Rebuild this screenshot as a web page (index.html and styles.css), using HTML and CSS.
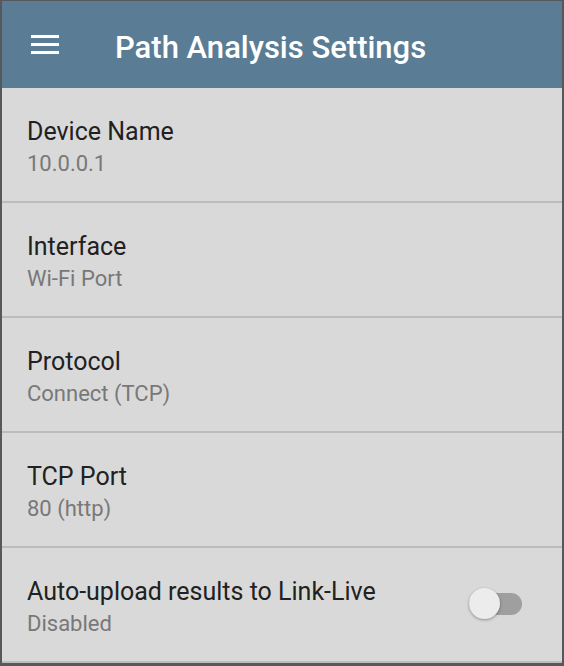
FILE: index.html
```html
<!DOCTYPE html>
<html lang="en">

<head>
    <title>Path Analysis Settings</title>

    <link rel="stylesheet" href="styles.css">
</head>

<body>
    <div class="screen">
        <header class="toolbar">
            <button class="toolbar__menu" aria-label="Menu">
                <span></span>
                <span></span>
                <span></span>
            </button>
            <h1 class="toolbar__title">Path Analysis Settings</h1>
        </header>

        <ul class="settings">
            <li class="setting">
                <div class="setting__text">
                    <div class="setting__title">Device Name</div>
                    <div class="setting__value">10.0.0.1</div>
                </div>
            </li>
            <li class="setting">
                <div class="setting__text">
                    <div class="setting__title">Interface</div>
                    <div class="setting__value">Wi-Fi Port</div>
                </div>
            </li>
            <li class="setting">
                <div class="setting__text">
                    <div class="setting__title">Protocol</div>
                    <div class="setting__value">Connect (TCP)</div>
                </div>
            </li>
            <li class="setting">
                <div class="setting__text">
                    <div class="setting__title">TCP Port</div>
                    <div class="setting__value">80 (http)</div>
                </div>
            </li>
            <li class="setting">
                <div class="setting__text">
                    <div class="setting__title">Auto-upload results to Link-Live</div>
                    <div class="setting__value">Disabled</div>
                </div>
                <label class="switch">
                    <input type="checkbox" />
                    <span class="switch__track"></span>
                    <span class="switch__thumb"></span>
                </label>
            </li>
        </ul>
    </div>
</body>

</html>
```

FILE: styles.css
```css
* {
    padding: 0;
    margin: 0;
    box-sizing: border-box;
}

body {
    background: #d9d9d9;
    font-family: Roboto, "Noto Sans", sans-serif;
}

.screen {
    width: 564px;
    height: 666px;
    border: 2px solid #56595c;
    border-top-width: 1px;
    border-bottom-width: 3px;
    background: #d9d9d9;
    overflow: hidden;
}

.toolbar {
    display: flex;
    align-items: center;
    height: 87px;
    background: #5a7d95;
    padding-left: 29px;
}

.toolbar__menu {
    display: flex;
    flex-direction: column;
    gap: 5px;
    width: 28px;
    background: none;
    border: none;
}

.toolbar__menu span {
    display: block;
    height: 3px;
    background: #fff;
}

.toolbar__title {
    margin: 7px 0 0 56px;
    color: #fff;
    font-size: 31px;
    font-weight: 500;
    line-height: 36px;
}

.settings {
    list-style: none;
}

.setting {
    display: flex;
    align-items: flex-start;
    height: 115px;
    padding: 29px 25px 0 25px;
    border-bottom: 2px solid #bcbcbc;
}

.setting__text {
    flex: 1;
}

.setting__title {
    color: #212121;
    font-size: 25px;
    line-height: 30px;
}

.setting__value {
    margin-top: 4px;
    color: #787878;
    font-size: 22px;
    line-height: 26px;
}

.switch {
    position: relative;
    width: 53px;
    height: 31px;
    margin: 12px 15px 0 0;
}

.switch input {
    display: none;
}

.switch__track {
    position: absolute;
    top: 4px;
    left: 0;
    width: 53px;
    height: 22px;
    border-radius: 11px;
    background: #9f9f9f;
}

.switch__thumb {
    position: absolute;
    top: -1px;
    left: 0;
    width: 31px;
    height: 31px;
    border-radius: 50%;
    background: #ececec;
    box-shadow: 0 1px 3px rgba(0, 0, 0, 0.35);
}
```
